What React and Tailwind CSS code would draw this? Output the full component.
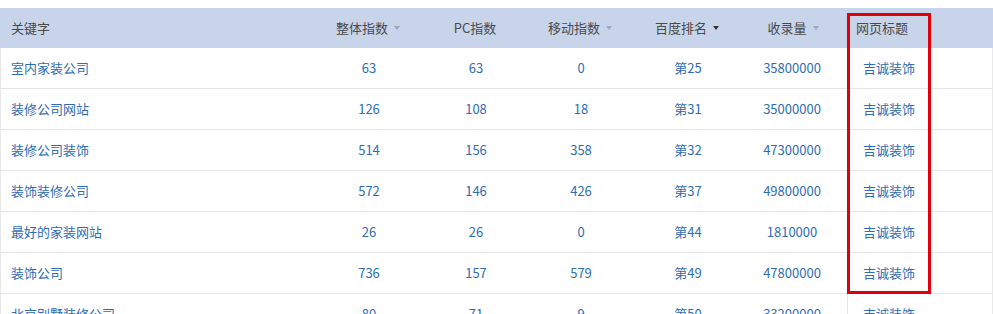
import React from "react";

const rows = [
  ["室内家装公司", "63", "63", "0", "第25", "35800000"],
  ["装修公司网站", "126", "108", "18", "第31", "35000000"],
  ["装修公司装饰", "514", "156", "358", "第32", "47300000"],
  ["装饰装修公司", "572", "146", "426", "第37", "49800000"],
  ["最好的家装网站", "26", "26", "0", "第44", "1810000"],
  ["装饰公司", "736", "157", "579", "第49", "47800000"],
  ["北京别墅装修公司", "80", "71", "9", "第50", "33200000"],
];

function Arrow({ dark }) {
  return (
    <span
      className={
        dark
          ? "ml-[6px] inline-block h-0 w-0 border-x-[3.5px] border-t-[4px] border-x-transparent border-t-[#333]"
          : "ml-[6px] inline-block h-0 w-0 border-x-[3.5px] border-t-[4px] border-x-transparent border-t-[#a0a8b8]"
      }
    />
  );
}

const grid = "grid grid-cols-[316px_104px_110px_100px_114px_102px_1fr]";

export default function App() {
  return (
    <div
      className="relative h-[314px] w-[993px] overflow-hidden bg-white pt-[8px] text-[13px]"
      style={{ fontFamily: '"Noto Sans CJK SC", "Noto Sans", sans-serif' }}
    >
      <div className={`${grid} h-[40px] items-center bg-[#c8d4ea] text-[#4a4a4a]`}>
        <div className="pl-[11px]">关键字</div>
        <div className="flex items-center justify-center">整体指数<Arrow /></div>
        <div className="flex items-center justify-center">PC指数</div>
        <div className="flex items-center justify-center">移动指数<Arrow /></div>
        <div className="flex items-center justify-center">百度排名<Arrow dark /></div>
        <div className="flex items-center justify-center pr-[4px]">收录量<Arrow /></div>
        <div className="pl-[10px]">网页标题</div>
      </div>
      <div className="border-x border-[#e8e8e8]">
        {rows.map((r, i) => (
          <div
            key={i}
            className={`${grid} h-[41px] items-center border-b border-[#e6e6e6] text-[#2f6db3]`}
          >
            <div className="pl-[10px]">{r[0]}</div>
            <div className="text-center">{r[1]}</div>
            <div className="text-center">{r[2]}</div>
            <div className="text-center">{r[3]}</div>
            <div className="text-center">{r[4]}</div>
            <div className="pr-[8px] text-center">{r[5]}</div>
            <div className="flex h-full items-center border-l border-[#e6e6e6] pl-[15px]">吉诚装饰</div>
          </div>
        ))}
      </div>
      <div className="pointer-events-none absolute left-[847px] top-[13px] h-[281px] w-[84px] border-[3px] border-[#e0000b]" />
    </div>
  );
}
